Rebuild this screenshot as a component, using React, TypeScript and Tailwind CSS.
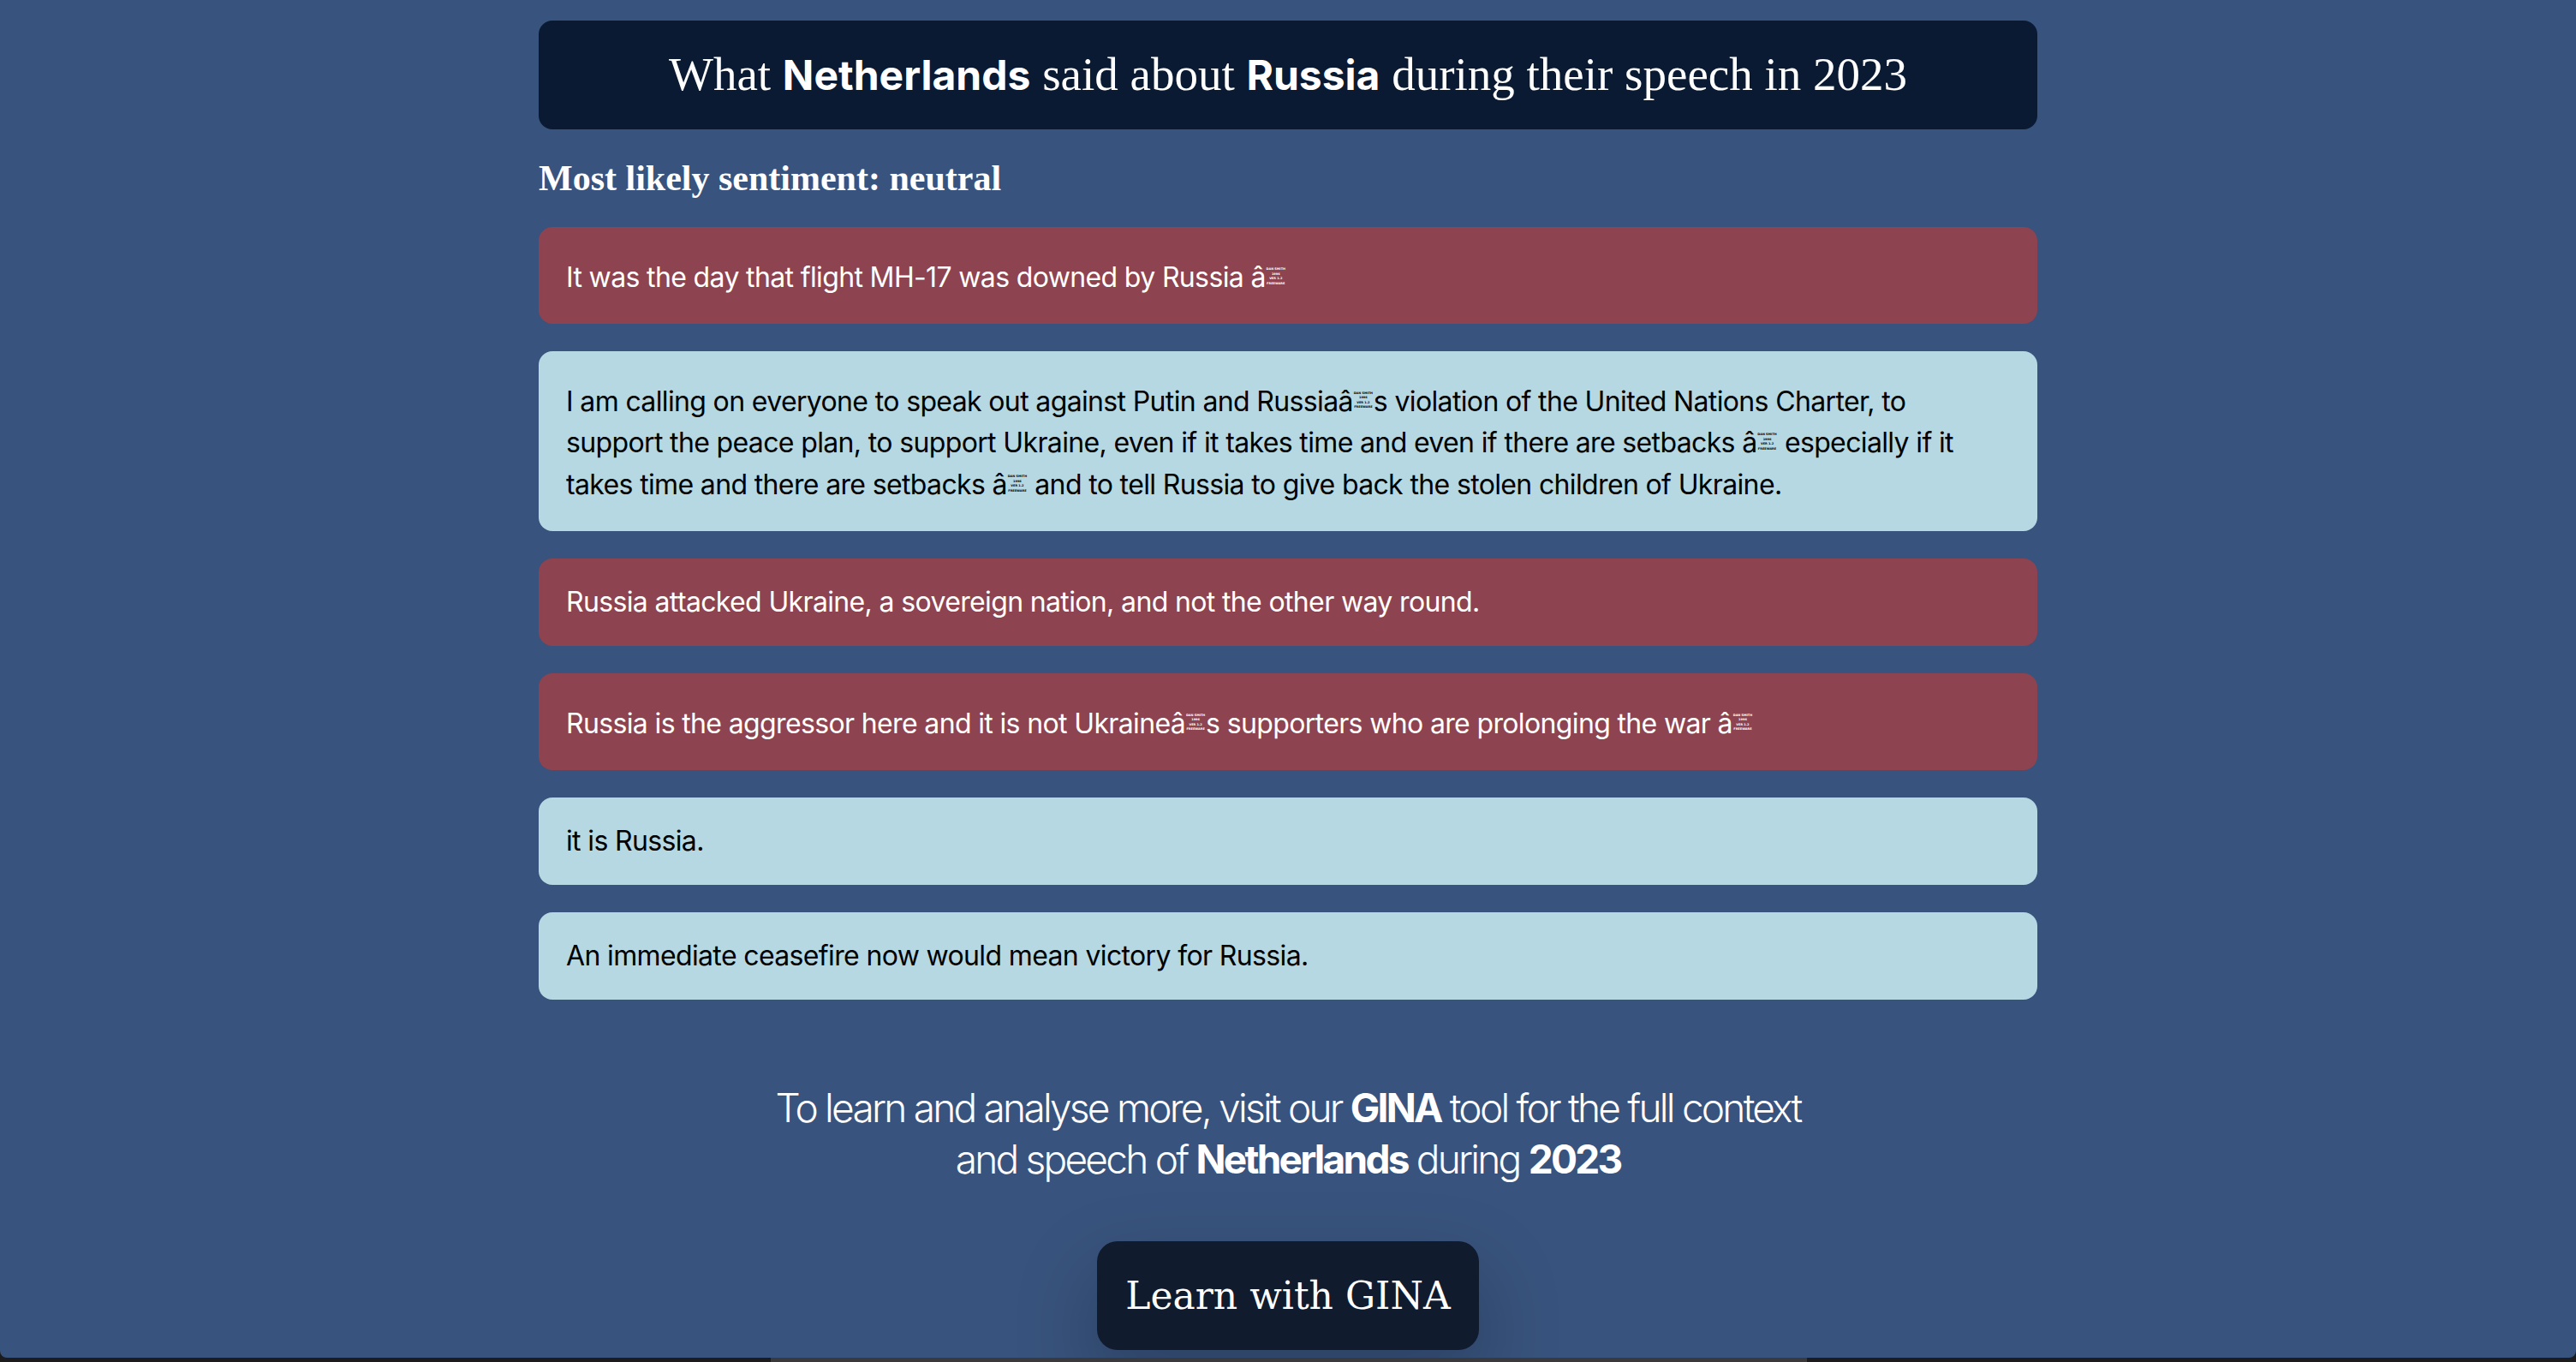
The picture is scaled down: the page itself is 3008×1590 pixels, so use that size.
import React from "react";

type Quote = {
  tone: "neg" | "neu";
  parts: string[];
  tall?: boolean;
};

// "~" marks the broken "â€”" glyph of the source page, "\n" a line break as shown there
const quotes: Quote[] = [
  {
    tone: "neg",
    tall: true,
    parts: ["It was the day that flight MH-17 was downed by Russia â", "~"],
  },
  {
    tone: "neu",
    tall: true,
    parts: [
      "I am calling on everyone to speak out against Putin and Russiaâ",
      "~",
      "s violation of the United Nations Charter, to",
      "\n",
      "support the peace plan, to support Ukraine, even if it takes time and even if there are setbacks â",
      "~",
      " especially if it",
      "\n",
      "takes time and there are setbacks â",
      "~",
      " and to tell Russia to give back the stolen children of Ukraine.",
    ],
  },
  {
    tone: "neg",
    parts: ["Russia attacked Ukraine, a sovereign nation, and not the other way round."],
  },
  {
    tone: "neg",
    tall: true,
    parts: [
      "Russia is the aggressor here and it is not Ukraineâ",
      "~",
      "s supporters who are prolonging the war â",
      "~",
    ],
  },
  { tone: "neu", parts: ["it is Russia."] },
  { tone: "neu", parts: ["An immediate ceasefire now would mean victory for Russia."] },
];

const BrokenGlyph = () => (
  <span className="inline-block h-[24px] w-[24px] overflow-hidden pt-[1px] text-center align-baseline font-['DejaVu_Sans',sans-serif] text-[3.5px] font-bold leading-[5.5px] tracking-normal">
    <span className="block">DAN SMITH</span>
    <span className="block">1996</span>
    <span className="block">VER 1.2</span>
    <span className="block">FREEWARE</span>
  </span>
);

const QuoteCard = ({ quote }: { quote: Quote }) => (
  <div
    className={
      quote.tone === "neg"
        ? quote.tall
          ? "rounded-2xl bg-[#8e4350] px-8 pb-[29px] pt-[35px] text-[32px] leading-[48.7px] tracking-[-0.02em] text-white"
          : "rounded-2xl bg-[#8e4350] px-8 py-8 text-[32px] leading-[38px] tracking-[-0.02em] text-white"
        : quote.tall
          ? "rounded-2xl bg-[#b5d8e3] px-8 pb-[29px] pt-[35px] text-[32px] leading-[48.7px] tracking-[-0.02em] text-black"
          : "rounded-2xl bg-[#b5d8e3] px-8 py-8 text-[32px] leading-[38px] tracking-[-0.02em] text-black"
    }
  >
    {quote.parts.map((p, i) =>
      p === "~" ? <BrokenGlyph key={i} /> : p === "\n" ? <br key={i} /> : <span key={i}>{p}</span>
    )}
  </div>
);

export default function App() {
  return (
    <div className="flex h-[1590px] w-full flex-col bg-[#1c1c1e]">
      <main className="flex flex-1 flex-col items-center rounded-b-lg bg-[#38537d] pt-6 font-['Inter',sans-serif]">
        <div className="w-[1750px]">
          <div className="rounded-2xl bg-[#0a1a32] py-8 text-center font-['Liberation_Serif',serif] text-[55px] leading-[62px] text-white">
            What <b className="font-['Inter',sans-serif] text-[48px] font-bold">Netherlands</b> said about{" "}
            <b className="font-['Inter',sans-serif] text-[48px] font-bold">Russia</b> during their speech in 2023
          </div>

          <h2 className="mt-[33px] font-['Liberation_Serif',serif] text-[42px] font-bold leading-[48px] text-white">
            Most likely sentiment: neutral
          </h2>

          <div className="mt-[33px] flex flex-col gap-8">
            {quotes.map((q, i) => (
              <QuoteCard key={i} quote={q} />
            ))}
          </div>
        </div>

        <p className="mt-[96px] text-center text-[46px] font-light leading-[60px] tracking-[-0.06em] text-white">
          To learn and analyse more, visit our <b className="font-bold">GINA</b> tool for the full context
          <br />
          and speech of <b className="font-bold">Netherlands</b> during <b className="font-bold">2023</b>
        </p>

        <button className="mt-[66px] rounded-3xl bg-[#101b2e] px-[33px] py-8 font-['DejaVu_Serif',serif] text-[44px] leading-[63px] text-white shadow-[0_40px_90px_10px_rgba(0,0,0,0.18)]">
          Learn with GINA
        </button>
      </main>
      <div className="flex h-[5px] w-full">
        <div className="ml-[900px] w-[1210px] bg-[#3a3a3c]" />
      </div>
    </div>
  );
}
